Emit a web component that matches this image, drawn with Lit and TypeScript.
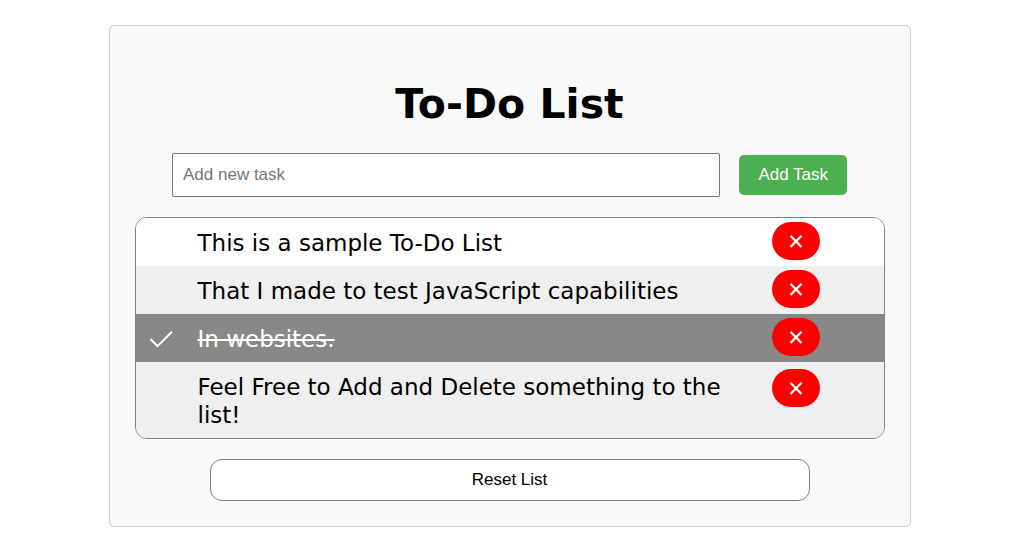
import { LitElement, html, css } from "lit";
import { customElement, state } from "lit/decorators.js";
import { classMap } from "lit/directives/class-map.js";

interface Task {
  text: string;
  done: boolean;
}

const SAMPLE_TASKS: Task[] = [
  { text: "This is a sample To-Do List", done: false },
  { text: "That I made to test JavaScript capabilities", done: false },
  { text: "In websites.", done: true },
  { text: "Feel Free to Add and Delete something to the list!", done: false },
];

@customElement("app-root")
export class AppRoot extends LitElement {
  @state() private tasks: Task[] = SAMPLE_TASKS;

  static styles = css`
    :host {
      display: block;
      font-family: "DejaVu Sans", Verdana, sans-serif;
      color: #000;
    }
    .card {
      box-sizing: border-box;
      max-width: 802px;
      margin: 25px auto 0;
      padding: 49px 25px 25px;
      background: #f9f9f9;
      border: 1px solid #ccc;
      border-radius: 5px;
      display: flex;
      flex-direction: column;
      align-items: center;
    }
    h1 {
      margin: 0 0 20px;
      font-size: 41px;
      line-height: 58px;
      font-weight: bold;
    }
    .entry {
      display: flex;
      align-items: center;
      width: 90%;
      gap: 19px;
      margin-bottom: 20px;
    }
    .entry input {
      flex: 1;
      min-width: 0;
      box-sizing: border-box;
      height: 44px;
      padding: 0 10px;
      border: 1px solid #767676;
      border-radius: 2px;
      background: #fff;
      font: 17px "Liberation Sans", Arial, sans-serif;
    }
    .entry input::placeholder {
      color: #757575;
    }
    .add {
      height: 40px;
      padding: 0 19px;
      border: 0;
      border-radius: 5px;
      background: #4caf50;
      color: #fff;
      font: 17px "Liberation Sans", Arial, sans-serif;
      cursor: pointer;
    }
    ul {
      box-sizing: border-box;
      width: 100%;
      margin: 0 0 20px;
      padding: 0;
      list-style: none;
      border: 1px solid #808080;
      border-radius: 12px;
      overflow: hidden;
    }
    li {
      display: grid;
      grid-template-columns: 62px 1fr 112px;
      background: #fff;
    }
    li:nth-child(even) {
      background: #efefef;
    }
    li.done {
      background: #888;
      color: #fff;
    }
    .mark {
      display: flex;
      align-items: center;
      padding: 2px 0 0 13px;
    }
    .text {
      padding: 11px 36px 9px 0;
      font-size: 23px;
      line-height: 28px;
      cursor: pointer;
    }
    .done .text {
      text-decoration: line-through 2px;
    }
    .action {
      display: grid;
      grid-template-rows: 1fr auto 9fr;
      padding-top: 3px;
    }
    .delete {
      grid-row: 2;
      display: flex;
      align-items: center;
      justify-content: center;
      width: 48px;
      height: 38px;
      padding: 0;
      border: 0;
      border-radius: 20px;
      background: #f00;
      cursor: pointer;
    }
    .reset {
      width: 80%;
      height: 42px;
      border: 1px solid #808080;
      border-radius: 12px;
      background: #fff;
      color: #000;
      font: 17px "Liberation Sans", Arial, sans-serif;
      cursor: pointer;
    }
  `;

  private add(event: Event) {
    event.preventDefault();
    const input = this.renderRoot.querySelector("input")!;
    const text = input.value.trim();
    if (!text) return;
    this.tasks = [...this.tasks, { text, done: false }];
    input.value = "";
  }

  private toggle(task: Task) {
    this.tasks = this.tasks.map((t) => (t === task ? { ...t, done: !t.done } : t));
  }

  private remove(task: Task) {
    this.tasks = this.tasks.filter((t) => t !== task);
  }

  render() {
    return html`
      <main class="card">
        <h1>To-Do List</h1>
        <form class="entry" @submit=${this.add}>
          <input type="text" placeholder="Add new task" aria-label="Add new task" />
          <button class="add" type="submit">Add Task</button>
        </form>
        <ul>
          ${this.tasks.map(
            (task) => html`
              <li class=${classMap({ done: task.done })}>
                <span class="mark">
                  ${task.done
                    ? html`<svg width="24" height="20" viewBox="0 0 24 20" fill="none" stroke="#fff" stroke-width="2" aria-hidden="true">
                        <path d="M1.5 10L8.5 17.2L23 2.8" />
                      </svg>`
                    : null}
                </span>
                <span class="text" @click=${() => this.toggle(task)}>${task.text}</span>
                <span class="action">
                  <button class="delete" type="button" aria-label="Delete task" @click=${() => this.remove(task)}>
                    <svg width="14" height="14" viewBox="0 0 14 14" stroke="#fff" stroke-width="2.2" aria-hidden="true">
                      <path d="M1.5 1.7L12.5 12.9M12.5 1.7L1.5 12.9" />
                    </svg>
                  </button>
                </span>
              </li>
            `
          )}
        </ul>
        <button class="reset" type="button" @click=${() => (this.tasks = [])}>Reset List</button>
      </main>
    `;
  }
}
